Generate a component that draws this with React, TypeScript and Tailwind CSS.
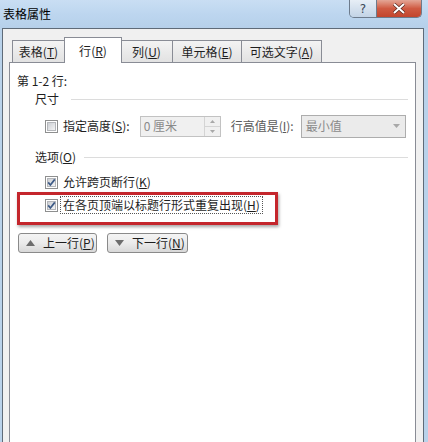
import React from 'react';

const font = "font-['Noto_Sans_CJK_SC','Noto_Sans',sans-serif]";

const CheckBox = ({ checked }: { checked?: boolean }) => (
  <svg width="13" height="13" viewBox="0 0 13 13" className="shrink-0">
    <defs>
      <linearGradient id="cbg" x1="0" y1="0" x2="1" y2="1">
        <stop offset="0" stopColor="#c9ccd1" />
        <stop offset="1" stopColor="#f7f7f7" />
      </linearGradient>
    </defs>
    <rect x="0.5" y="0.5" width="12" height="12" fill="#fff" stroke="#8e8f8f" />
    <rect x="2.5" y="2.5" width="8" height="8" fill="url(#cbg)" stroke="#b4b6ba" />
    {checked && (
      <path d="M3.2 6.4 L5.4 9 L9.8 3.4" fill="none" stroke="#3d5a86" strokeWidth="1.7" />
    )}
  </svg>
);

const Tab = ({ label, k, w, active }: { label: string; k: string; w: string; active?: boolean }) => (
  <div
    className={
      active
        ? `${w} h-[26px] -ml-px -mr-px relative z-10 bg-white border border-b-0 border-[#898c95] flex items-center justify-center text-[#1e1e1e]`
        : `${w} h-[22px] mt-[3px] -ml-px bg-gradient-to-b from-[#f3f3f3] to-[#e2e2e2] border border-b-0 border-[#898c95] flex items-center justify-center text-[#1e1e1e]`
    }
  >
    {label}(<u>{k}</u>)
  </div>
);

const SectionTitle = ({ text, k, lineStart }: { text: string; k?: string; lineStart: string }) => (
  <div className="flex items-center h-[16px] pl-[25px] pr-[7px]">
    <span className="text-[#1e1e1e]">
      {text}
      {k && (
        <>
          (<u>{k}</u>)
        </>
      )}
    </span>
    <div className={`flex-1 h-px bg-[#dcdcdc] ${lineStart}`} />
  </div>
);

const NavButton = ({ up, label, k, w }: { up?: boolean; label: string; k: string; w: string }) => (
  <div
    className={`${w} h-[20px] rounded-[3px] border border-[#8a8a8a] bg-gradient-to-b from-[#f4f4f4] via-[#ebebeb] to-[#d8d8d8] flex items-center pl-[7px] gap-[8px] text-[#1e1e1e]`}
  >
    <svg width="9" height="6" viewBox="0 0 9 6">
      {up ? <path d="M0 6 L4.5 0 L9 6 Z" fill="#6d6d6d" /> : <path d="M0 0 L9 0 L4.5 6 Z" fill="#6d6d6d" />}
    </svg>
    <span>
      {label}(<u>{k}</u>)
    </span>
  </div>
);

export default function App() {
  return (
    <div className={`w-[428px] h-[442px] overflow-hidden flex flex-col bg-[#b9d2ea] text-[12px] leading-[16px] ${font}`}>
      {/* title bar */}
      <div className="h-[28px] shrink-0 flex items-start bg-gradient-to-b from-[#c9def3] via-[#bdd6ef] to-[#b6d0ea]">
        <div className="pl-[3px] pt-[6px] text-[12px] text-black">表格属性</div>
        <div className="flex-1" />
        <div className="mr-[6px] flex h-[18px] rounded-b-[5px] border border-t-0 border-[#6d7b8c] overflow-hidden">
          <div className="w-[27px] bg-gradient-to-b from-[#e7eef6] to-[#c3d4e6] border-r border-[#6d7b8c] flex items-center justify-center text-[12px] leading-none text-[#3b4756] font-['DejaVu_Sans',sans-serif]">
            ?
          </div>
          <div className="w-[44px] bg-gradient-to-b from-[#e3a696] via-[#cf5a42] to-[#c2452d] flex items-center justify-center">
            <svg width="14" height="11" viewBox="0 0 14 11">
              <path d="M2 1 L12 10 M12 1 L2 10" stroke="#5a2a20" strokeWidth="3.4" />
              <path d="M2 1 L12 10 M12 1 L2 10" stroke="#ffffff" strokeWidth="2" />
            </svg>
          </div>
        </div>
      </div>

      {/* client area */}
      <div className="flex-1 ml-[2px] mr-[4px] border border-b-0 border-[#5f6b78] bg-[#f0f0f0] pl-[6px] pr-[7px] pt-[8px] flex flex-col">
        <div className="flex pl-[3px] -mb-px">
          <div className="ml-px" />
          <Tab label="表格" k="T" w="w-[53px]" />
          <Tab label="行" k="R" w="w-[58px]" active />
          <Tab label="列" k="U" w="w-[53px]" />
          <Tab label="单元格" k="E" w="w-[70px]" />
          <Tab label="可选文字" k="A" w="w-[81px]" />
        </div>

        <div className="flex-1 bg-white border border-b-0 border-[#898c95] flex flex-col">
          <div className="mt-[10px] pl-[7px] text-[#1e1e1e]">第 1-2 行:</div>

          <div className="mt-[2px]">
            <SectionTitle text="尺寸" lineStart="ml-[12px]" />
          </div>

          <div className="mt-[8px] h-[22px] flex items-center pl-[35px] text-[#1e1e1e]">
            <CheckBox />
            <span className="ml-[5px]">
              指定高度(<u>S</u>):
            </span>
            <div className="ml-[10px] w-[81px] h-[21px] flex border border-[#c2c2c2] bg-[#f0f0f0]">
              <div className="flex-1 flex items-center pl-[3px] text-[#8a8a8a]">0 厘米</div>
              <div className="w-[16px] border-l border-[#d4d4d4] flex flex-col">
                <div className="flex-1 flex items-center justify-center border-b border-[#d4d4d4]">
                  <svg width="5" height="3" viewBox="0 0 5 3"><path d="M0 3 L2.5 0 L5 3 Z" fill="#a8a8a8" /></svg>
                </div>
                <div className="flex-1 flex items-center justify-center">
                  <svg width="5" height="3" viewBox="0 0 5 3"><path d="M0 0 L5 0 L2.5 3 Z" fill="#a8a8a8" /></svg>
                </div>
              </div>
            </div>
            <span className="ml-[10px] text-[#5a5a5a]">
              行高值是(<u>I</u>):
            </span>
            <div className="ml-[7px] w-[105px] h-[23px] flex border border-[#adadad] bg-[#ebebeb]">
              <div className="flex-1 flex items-center pl-[4px] text-[#8a8a8a]">最小值</div>
              <div className="w-[17px] flex items-center justify-center">
                <svg width="7" height="4" viewBox="0 0 7 4"><path d="M0 0 L7 0 L3.5 4 Z" fill="#a8a8a8" /></svg>
              </div>
            </div>
          </div>

          <div className="mt-[12px]">
            <SectionTitle text="选项" k="O" lineStart="ml-[8px]" />
          </div>

          <div className="mt-[9px] h-[16px] flex items-center pl-[35px] text-[#1e1e1e]">
            <CheckBox checked />
            <span className="ml-[5px]">
              允许跨页断行(<u>K</u>)
            </span>
          </div>

          <div className="mt-[2px] ml-[7px] w-[261px] h-[33px] border-[3px] border-[#c4262c] shadow-[1px_2px_3px_rgba(0,0,0,0.35)] pt-[2px] pl-[25px]">
            <div className="h-[16px] flex items-center text-[#1e1e1e]">
              <CheckBox checked />
              <span className="ml-[3px] px-[2px] outline outline-1 outline-dotted outline-[#555]">
                在各页顶端以标题行形式重复出现(<u>H</u>)
              </span>
            </div>
          </div>

          <div className="mt-[8px] pl-[8px] flex gap-[10px]">
            <NavButton up label="上一行" k="P" w="w-[79px]" />
            <NavButton label="下一行" k="N" w="w-[81px]" />
          </div>
        </div>
      </div>
    </div>
  );
}
